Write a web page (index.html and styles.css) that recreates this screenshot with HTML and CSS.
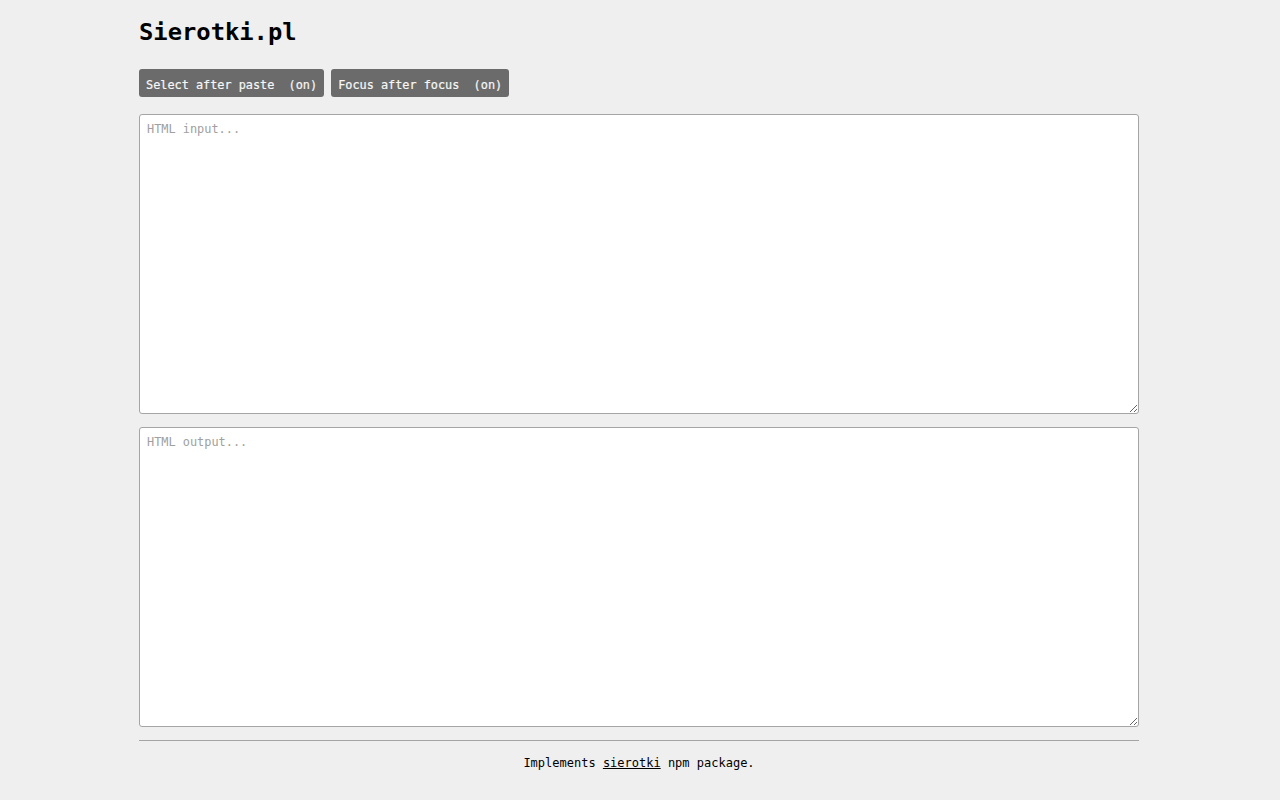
FILE: index.html
```html
<!DOCTYPE html>
<html lang="pl">
<head>
<meta charset="utf-8">
<title>Sierotki.pl</title>
<link rel="stylesheet" href="styles.css">
</head>
<body>
<div class="page">
  <h1 class="title">Sierotki.pl</h1>
  <div class="toolbar">
    <button class="toggle">Select after paste&nbsp; (on)</button>
    <button class="toggle">Focus after focus&nbsp; (on)</button>
  </div>
  <textarea class="box" placeholder="HTML input..."></textarea>
  <textarea class="box" placeholder="HTML output..."></textarea>
  <hr class="rule">
  <p class="footer">Implements <a href="#" class="link">sierotki</a> npm package.</p>
</div>
</body>
</html>
```
FILE: styles.css
```css
html, body {
  margin: 0;
  padding: 0;
  background: #efefef;
}
body {
  font-family: "DejaVu Sans Mono", "Liberation Mono", monospace;
  color: #000;
}
.page {
  width: 1000px;
  margin: 0 auto;
  display: flex;
  flex-direction: column;
  transform: translateX(-1px);
}
.title {
  margin: 16px 0 0;
  font-size: 23.8px;
  line-height: 32px;
  font-weight: bold;
}
.toolbar {
  display: flex;
  gap: 7px;
  margin-top: 21px;
}
.toggle {
  font-family: inherit;
  font-size: 11.85px;
  height: 28px;
  padding: 3px 7px 0;
  background: #6b6b6b;
  color: #f7f7f7;
  border: none;
  border-radius: 3px;
  -webkit-text-stroke: 0.2px #f7f7f7;
}
.box {
  display: block;
  box-sizing: border-box;
  width: 1000px;
  height: 300px;
  margin: 17px 0 0;
  padding: 7px;
  font-family: inherit;
  font-size: 11.9px;
  border: 1px solid #a5a5a5;
  border-radius: 3px;
  background: #fff;
}
.box + .box {
  margin-top: 13px;
}
.box::placeholder {
  color: #a0a0a0;
}
.rule {
  width: 100%;
  margin: 13px 0 0;
  border: none;
  border-top: 1px solid #a5a5a5;
  height: 0;
}
.footer {
  margin: 14px 0 0;
  text-align: center;
  font-size: 12px;
  line-height: 17px;
}
.link {
  color: #000;
}
```
